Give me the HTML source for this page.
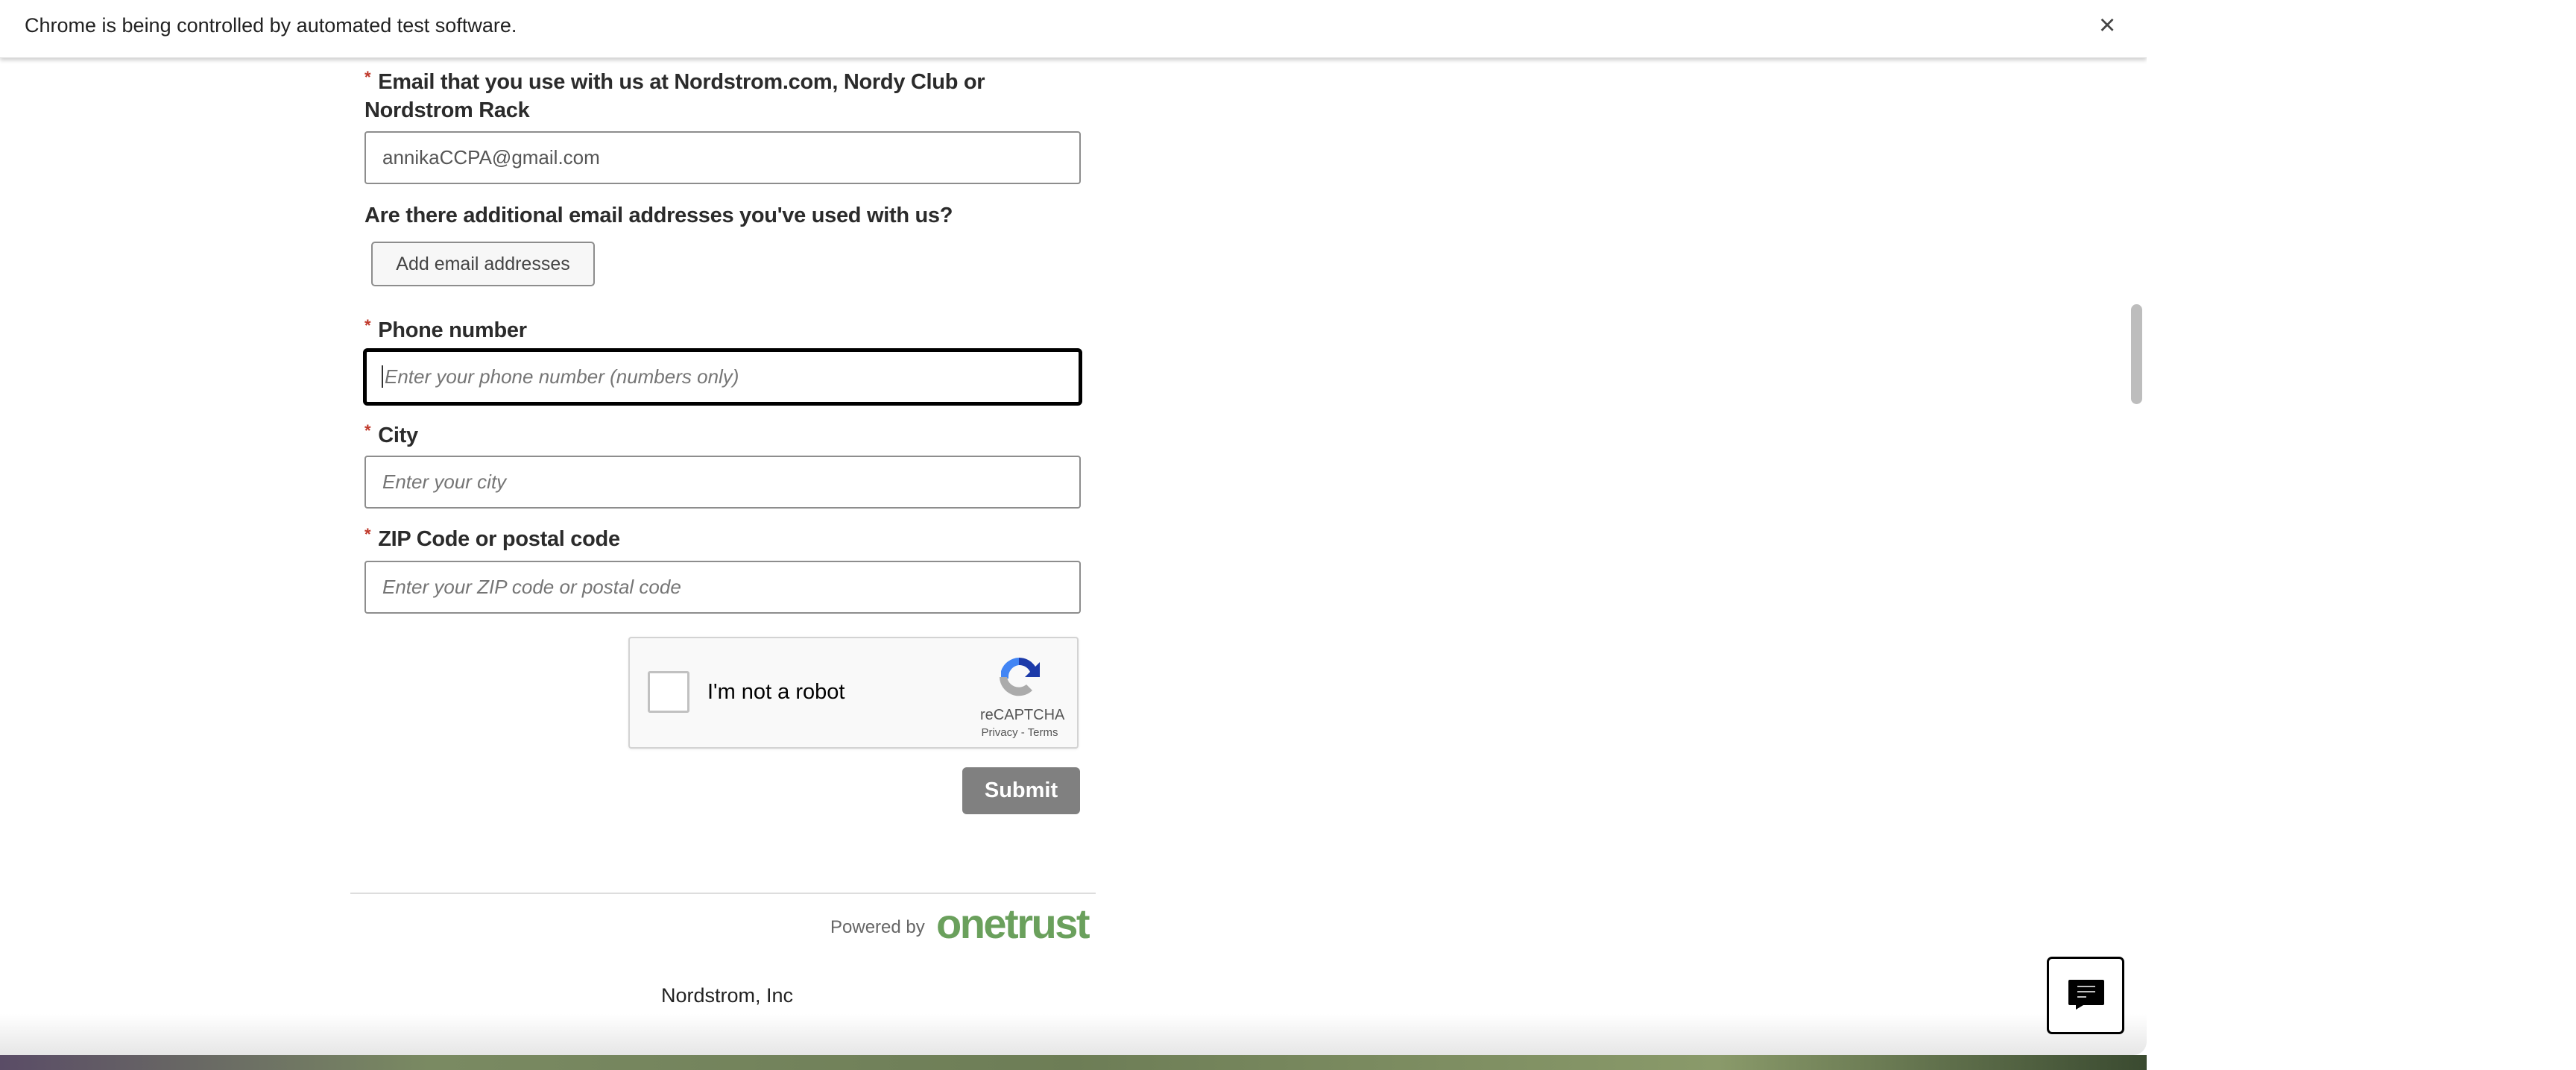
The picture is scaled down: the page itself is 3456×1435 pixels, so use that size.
<!DOCTYPE html>
<html><head><meta charset="utf-8"><style>
*{margin:0;padding:0;box-sizing:border-box}
html,body{width:3456px;height:1435px;overflow:hidden;background:#fff;font-family:"Liberation Sans",sans-serif}
.abs{position:absolute}
#win{position:absolute;left:0;top:0;width:2880px;height:1415px;background:#fff;border-bottom-right-radius:18px;overflow:hidden}
#bar{position:absolute;left:0;top:0;width:2880px;height:78px;background:#fff;box-shadow:0 3px 5px rgba(0,0,0,.18);border-bottom:1px solid #ddd;z-index:2}
#bar .t{position:absolute;left:33px;top:19px;font-size:27px;color:#222}
#bar .x{position:absolute;left:2816px;top:13px;font-size:38px;color:#444}
.lbl{position:absolute;left:489px;font-size:29px;font-weight:bold;color:#2b2b2b;line-height:38px;letter-spacing:-.3px}
.lbl .s{color:#c0392b;font-size:22px;vertical-align:top;position:relative;top:-6px;margin-right:10px}
.inp{position:absolute;left:489px;width:961px;height:71px;border:2px solid #8d8d8d;border-radius:4px;font-size:26px;color:#555;padding-left:22px;line-height:67px}
.ph{font-style:italic;color:#757575}
#wall{position:absolute;left:0;top:1415px;width:2880px;height:20px;background:linear-gradient(90deg,#5a4c66,#7a8a62 20%,#6d7d56 50%,#8a9a6a 80%,#3a4a30)}
#fade{position:absolute;left:0;top:1360px;width:2880px;height:55px;background:linear-gradient(#fff,#e6e6e6)}
</style></head><body>
<div id="win">
<div id="fade"></div>
<div id="bar"><div class="t">Chrome is being controlled by automated test software.</div><div class="x">×</div></div>

<div class="lbl" style="top:91px"><span class="s">*</span>Email that you use with us at Nordstrom.com, Nordy Club or<br>Nordstrom Rack</div>
<div class="inp" style="top:176px">annikaCCPA@gmail.com</div>

<div class="lbl" style="top:270px">Are there additional email addresses you've used with us?</div>
<div class="abs" style="left:498px;top:324px;width:300px;height:60px;border:2px solid #8d8d8d;border-radius:5px;background:#f7f7f7;font-size:25px;color:#444;text-align:center;line-height:56px">Add email addresses</div>

<div class="lbl" style="top:424px"><span class="s">*</span>Phone number</div>
<div class="inp" style="left:487px;top:467px;width:965px;height:77px;border:5px solid #000;border-radius:6px;line-height:67px;padding-left:20px"><span style="border-left:2px solid #333;margin-right:2px"></span><span class="ph">Enter your phone number (numbers only)</span></div>

<div class="lbl" style="top:565px"><span class="s">*</span>City</div>
<div class="inp" style="top:611px"><span class="ph">Enter your city</span></div>

<div class="lbl" style="top:704px"><span class="s">*</span>ZIP Code or postal code</div>
<div class="inp" style="top:752px"><span class="ph">Enter your ZIP code or postal code</span></div>

<div class="abs" style="left:843px;top:854px;width:604px;height:150px;border:2px solid #d3d3d3;border-radius:4px;background:#f9f9f9;box-shadow:0 1px 3px rgba(0,0,0,.08)">
  <div class="abs" style="left:24px;top:44px;width:56px;height:56px;border:3px solid #c1c1c1;border-radius:3px;background:#fff"></div>
  <div class="abs" style="left:104px;top:56px;font-size:29px;color:#000">I'm not a robot</div>
  <svg class="abs" style="left:490px;top:20px" width="64" height="64" viewBox="0 0 64 64">
    <path d="M32 6a26 26 0 0 1 22 12l6-6v20H40l7-7a16 16 0 0 0-15-9z" fill="#1c3aa9"/>
    <path d="M32 6A26 26 0 0 0 8 24l0 10h10v-4a16 16 0 0 1 14-14z" fill="#4285f4"/>
    <path d="M6 32a26 26 0 0 0 44 18l-8-8a16 16 0 0 1-26-10H6z" fill="#ababab"/>
  </svg>
  <div class="abs" style="left:470px;top:92px;width:106px;text-align:center;font-size:20px;color:#555">reCAPTCHA</div>
  <div class="abs" style="left:460px;top:118px;width:126px;text-align:center;font-size:15px;color:#555">Privacy - Terms</div>
</div>

<div class="abs" style="left:1291px;top:1029px;width:158px;height:63px;background:#808080;border-radius:6px;color:#fff;font-weight:bold;font-size:29px;text-align:center;line-height:63px">Submit</div>

<div class="abs" style="left:470px;top:1197px;width:1000px;height:2px;background:#ddd"></div>
<div class="abs" style="left:1114px;top:1230px;font-size:24px;color:#666">Powered by</div>
<div class="abs" style="left:1256px;top:1206px;font-size:56px;font-weight:bold;color:#6aa05c;letter-spacing:-2.5px">onetrust</div>
<div class="abs" style="left:887px;top:1320px;font-size:27px;color:#222">Nordstrom, Inc</div>

<div class="abs" style="left:2859px;top:408px;width:15px;height:134px;background:#bdbdbd;border-radius:8px"></div>

<div class="abs" style="left:2746px;top:1283px;width:104px;height:104px;border:3px solid #000;border-radius:7px;background:#fff">
  <svg class="abs" style="left:26px;top:28px" width="48" height="40" viewBox="0 0 48 40">
    <path d="M2 0h44a2 2 0 0 1 2 2v30a2 2 0 0 1-2 2H20l-10 6v-6H2a2 2 0 0 1-2-2V2a2 2 0 0 1 2-2z" fill="#000"/>
    <path d="M12 9h24M12 16h24M12 23h12" stroke="#fff" stroke-width="1.5"/>
  </svg>
</div>
</div>
<div id="wall"></div>
</body></html>
